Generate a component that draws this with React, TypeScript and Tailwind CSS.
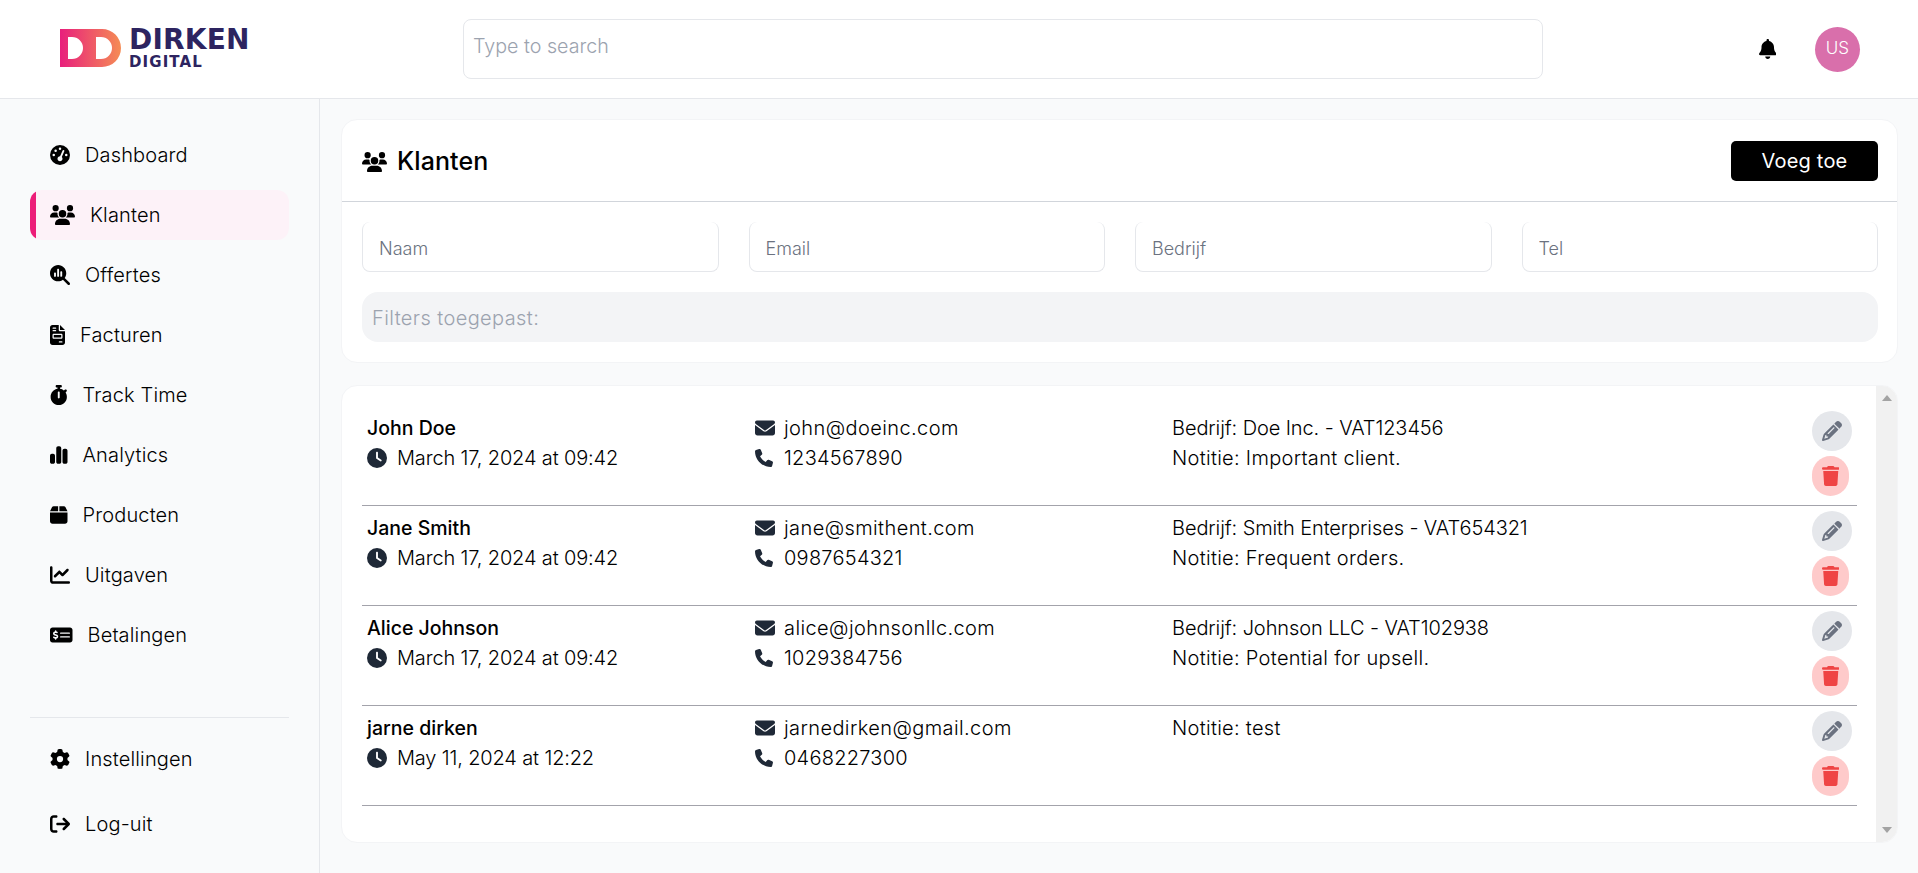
import React from "react";
import {
  FaGaugeHigh, FaUsers, FaMagnifyingGlassChart, FaFileInvoice, FaStopwatch, FaChartSimple, FaBox, FaChartLine,
  FaMoneyCheckDollar, FaGear, FaArrowRightFromBracket, FaBell, FaClock, FaEnvelope, FaPhone, FaPencil, FaTrash,
} from "react-icons/fa6";

const font = "font-['Inter','Liberation_Sans',sans-serif]";

const nav = [
  { label: "Dashboard", Icon: FaGaugeHigh, w: "w-5" },
  { label: "Klanten", Icon: FaUsers, active: true, w: "w-[25px]" },
  { label: "Offertes", Icon: FaMagnifyingGlassChart, w: "w-5" },
  { label: "Facturen", Icon: FaFileInvoice, w: "w-[15px]" },
  { label: "Track Time", Icon: FaStopwatch, w: "w-[17.5px]" },
  { label: "Analytics", Icon: FaChartSimple, w: "w-[17.5px]" },
  { label: "Producten", Icon: FaBox, w: "w-[17.5px]" },
  { label: "Uitgaven", Icon: FaChartLine, w: "w-5" },
  { label: "Betalingen", Icon: FaMoneyCheckDollar, w: "w-[22.5px]" },
];

const clients = [
  { name: "John Doe", date: "March 17, 2024 at 09:42", email: "john@doeinc.com", tel: "1234567890", company: "Bedrijf: Doe Inc. - VAT123456", note: "Notitie: Important client." },
  { name: "Jane Smith", date: "March 17, 2024 at 09:42", email: "jane@smithent.com", tel: "0987654321", company: "Bedrijf: Smith Enterprises - VAT654321", note: "Notitie: Frequent orders." },
  { name: "Alice Johnson", date: "March 17, 2024 at 09:42", email: "alice@johnsonllc.com", tel: "1029384756", company: "Bedrijf: Johnson LLC - VAT102938", note: "Notitie: Potential for upsell." },
  { name: "jarne dirken", date: "May 11, 2024 at 12:22", email: "jarnedirken@gmail.com", tel: "0468227300", company: "", note: "Notitie: test" },
];

function Logo() {
  return (
    <div className="flex items-start gap-[8px]">
      <svg width="61" height="38" viewBox="0 0 61 38" className="shrink-0">
        <defs>
          <linearGradient id="dd" x1="0" x2="1" y1="0" y2="0">
            <stop offset="0" stopColor="#e81f7c" />
            <stop offset="1" stopColor="#f58c55" />
          </linearGradient>
        </defs>
        <path
          fillRule="evenodd"
          fill="url(#dd)"
          d="M0 0H42A19 19 0 0 1 42 38H0ZM8 8V30H12A11 11 0 0 0 12 8ZM36 8V30H41A11 11 0 0 0 41 8Z"
        />
      </svg>
      <div className="font-['DejaVu_Sans',sans-serif] text-[#2d2460] font-bold -mt-[4px]">
        <div className="text-[28px] leading-[30px] h-[29px] tracking-[0.2px]">DIRKEN</div>
        <div className="text-[15px] leading-[16px] tracking-[1.1px]">DIGITAL</div>
      </div>
    </div>
  );
}

function Row({ c }: { c: (typeof clients)[number] }) {
  return (
    <div className="flex h-[100px] border-b border-[#a3a3ab] px-[5px] text-[20px] font-light text-black">
      <div className="w-[388px] pt-[9px] shrink-0">
        <div className="font-medium text-black text-[19.5px] h-[31px] leading-[26px]">{c.name}</div>
        <div className="flex items-center gap-[10px] leading-[24px] tracking-[-0.15px]">
          <FaClock className="h-5 w-5 text-[#1f2937] shrink-0" />
          <span>{c.date}</span>
        </div>
      </div>
      <div className="w-[417px] pt-[9px] shrink-0">
        <div className="flex items-center gap-[9px] h-[26px] mb-[5px] leading-[26px] tracking-[0.4px]">
          <FaEnvelope className="h-5 w-5 text-[#1f2937] shrink-0" />
          <span>{c.email}</span>
        </div>
        <div className="flex items-center gap-[11px] leading-[24px] tracking-[0.25px]">
          <FaPhone className="h-[18px] w-[18px] text-[#1f2937] shrink-0" />
          <span>{c.tel}</span>
        </div>
      </div>
      <div className="flex-1 pt-[9px]">
        <div className={c.company ? "h-[31px] leading-[26px] tracking-[-0.1px]" : "h-[31px] leading-[26px] tracking-[0.3px]"}>{c.company || c.note}</div>
        {c.company && <div className="leading-[24px] tracking-[0.3px]">{c.note}</div>}
      </div>
      <div className="w-[40px] pt-[5px] flex flex-col gap-[5px] shrink-0">
        <button className="h-10 w-10 rounded-full bg-[#e5e7eb] flex items-center justify-center">
          <FaPencil className="h-5 w-5 text-[#6b7280]" />
        </button>
        <button className="h-10 w-[37px] rounded-full bg-[#fecaca] flex items-center justify-center">
          <FaTrash className="h-5 w-[17.5px] text-[#ef4444]" />
        </button>
      </div>
    </div>
  );
}

export default function App() {
  return (
    <div className={`${font} h-[873px] w-full overflow-hidden bg-[#f9fafb] text-[20px] text-[#111827] flex flex-col`}>
      <header className="h-[99px] shrink-0 bg-white border-b border-[#e5e7eb] flex items-center">
        <div className="w-[463px] pl-[60px] shrink-0"><Logo /></div>
        <input
          placeholder="Type to search"
          className="w-[1080px] h-[60px] rounded-lg border border-[#e5e7eb] pl-[9px] pb-[6px] text-[19.7px] font-light placeholder:text-[#9ca3af] outline-none"
        />
        <div className="flex-1 flex items-center justify-end pr-[58px] gap-[39px]">
          <FaBell className="h-5 w-[17.5px] text-black" />
          <div className="w-[45px] h-[45px] rounded-full bg-[#d96fab] text-white text-[17px] font-light flex items-center justify-center">US</div>
        </div>
      </header>
      <div className="flex flex-1 min-h-0">
        <aside className="w-[320px] shrink-0 border-r border-[#e5e7eb] px-[30px] pt-[31px] pb-[24px] flex flex-col font-light tracking-[0.15px]">
          <nav className="flex flex-col gap-[10px]">
            {nav.map(({ label, Icon, active, w }) => (
              <div
                key={label}
                className={
                  active
                    ? "h-[50px] flex items-center rounded-xl overflow-hidden bg-[#fdf2f8]"
                    : "h-[50px] flex items-center pl-5"
                }
              >
                {active && <div className="w-[6px] self-stretch bg-[#ec1e79] mr-[14px] shrink-0" />}
                <Icon className={`h-5 ${w} text-black shrink-0 mr-[15px]`} />
                <span className="text-black">{label}</span>
              </div>
            ))}
          </nav>
          <div className="mt-auto border-t border-[#e5e7eb] pt-[16px] flex flex-col gap-[15px]">
            {[
              { label: "Instellingen", Icon: FaGear },
              { label: "Log-uit", Icon: FaArrowRightFromBracket },
            ].map(({ label, Icon }) => (
              <div key={label} className="h-[50px] flex items-center gap-[15px] pl-5">
                <Icon className="h-5 w-5 text-black shrink-0" />
                <span className="text-black">{label}</span>
              </div>
            ))}
          </div>
        </aside>
        <main className="flex-1 min-w-0 pt-[20px] pl-[21px] pr-[20px] flex flex-col gap-[22px]">
          <section className="h-[244px] shrink-0 bg-white rounded-2xl border border-[#f3f4f6]">
            <div className="h-[82px] border-b border-[#d1d5db] flex items-center justify-between pl-[20px] pr-[19px]">
              <div className="flex items-center gap-[10px] pt-[2px]">
                <FaUsers className="h-5 w-[25px] text-black" />
                <h1 className="text-[25px] font-medium text-black tracking-[0.1px]">Klanten</h1>
              </div>
              <button className="w-[147px] h-10 bg-black text-white rounded-[5px] text-[20px] font-normal tracking-[0.2px]">Voeg toe</button>
            </div>
            <div className="pl-[20px] pr-[19px] pt-5">
              <div className="grid grid-cols-4 gap-[30px]">
                {["Naam", "Email", "Bedrijf", "Tel"].map((p) => (
                  <input
                    key={p}
                    placeholder={p}
                    className="h-[50px] min-w-0 rounded-lg border border-t-0 border-[#e5e7eb] pl-[16px] pt-[3px] text-[18px] font-light placeholder:text-[#6b7280] outline-none"
                  />
                ))}
              </div>
              <div className="mt-5 h-[50px] rounded-2xl bg-[#f3f4f6] flex items-center px-[10px] pt-[2px] text-[#9ca3af] font-light tracking-[0.4px]">Filters toegepast:</div>
            </div>
          </section>
          <section className="h-[458px] shrink-0 bg-white rounded-2xl border border-[#f3f4f6] flex overflow-hidden">
            <div className="flex-1 min-w-0 pl-[20px] pr-[19px] pt-[20px]">
              {clients.map((c) => (
                <Row key={c.name} c={c} />
              ))}
            </div>
            <div className="w-[21px] shrink-0 bg-[#f1f1f1] flex flex-col items-center justify-between py-[9px]">
              <svg width="10" height="6" viewBox="0 0 10 6"><path d="M5 0L10 6H0Z" fill="#a3a3a3" /></svg>
              <svg width="10" height="6" viewBox="0 0 10 6"><path d="M0 0H10L5 6Z" fill="#a3a3a3" /></svg>
            </div>
          </section>
        </main>
      </div>
    </div>
  );
}
